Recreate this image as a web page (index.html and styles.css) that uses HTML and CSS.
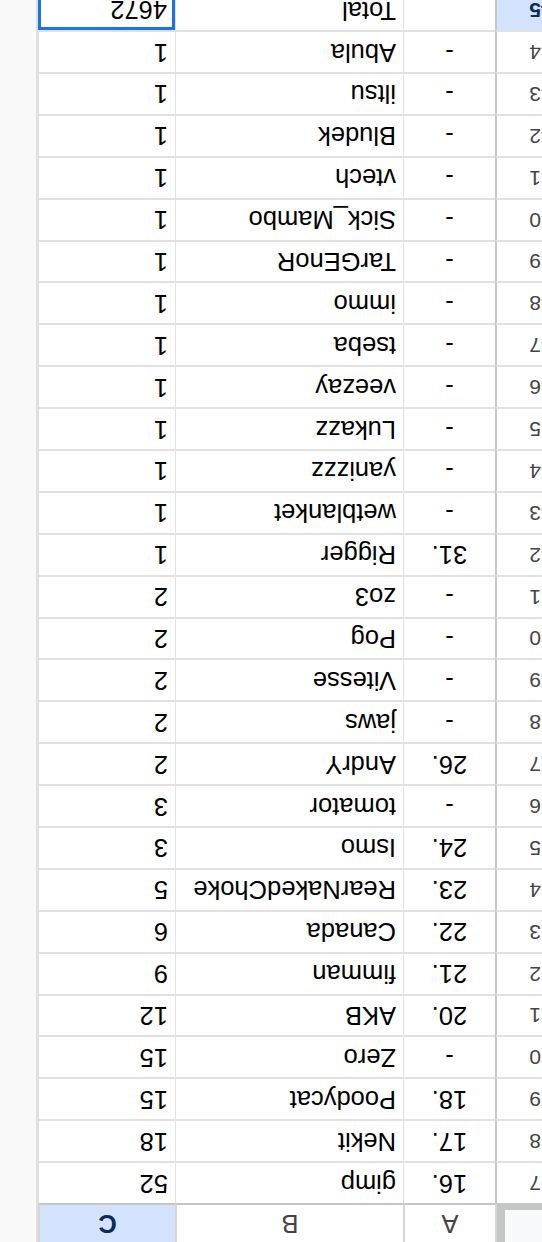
FILE: index.html
```html
<!DOCTYPE html>
<html lang="en">
<head>
  <meta charset="UTF-8" />
  <meta name="viewport" content="width=device-width, initial-scale=1.0"/>
  <title>Sheet</title>
  <link rel="stylesheet" href="styles.css">
</head>
<body>
  <!-- the whole screen is shown upside down -->
  <div class="screen">
    <div class="sheet">
      <div class="row head">
        <div class="corner"><span></span></div>
        <div class="colhead">A</div>
        <div class="colhead">B</div>
        <div class="colhead active">C</div>
      </div>

      <div class="row"><div class="num">17</div><div class="a">16.</div><div class="b">gimp</div><div class="c">52</div></div>
      <div class="row"><div class="num">18</div><div class="a">17.</div><div class="b">Nekit</div><div class="c">18</div></div>
      <div class="row"><div class="num">19</div><div class="a">18.</div><div class="b">Poodycat</div><div class="c">15</div></div>
      <div class="row"><div class="num">20</div><div class="a">-</div><div class="b">Zero</div><div class="c">15</div></div>
      <div class="row"><div class="num">21</div><div class="a">20.</div><div class="b">AKB</div><div class="c">12</div></div>
      <div class="row"><div class="num">22</div><div class="a">21.</div><div class="b">fimman</div><div class="c">9</div></div>
      <div class="row"><div class="num">23</div><div class="a">22.</div><div class="b">Canada</div><div class="c">6</div></div>
      <div class="row"><div class="num">24</div><div class="a">23.</div><div class="b">RearNakedChoke</div><div class="c">5</div></div>
      <div class="row"><div class="num">25</div><div class="a">24.</div><div class="b">Ismo</div><div class="c">3</div></div>
      <div class="row"><div class="num">26</div><div class="a">-</div><div class="b">tomator</div><div class="c">3</div></div>
      <div class="row"><div class="num">27</div><div class="a">26.</div><div class="b">AndrY</div><div class="c">2</div></div>
      <div class="row"><div class="num">28</div><div class="a">-</div><div class="b">jaws</div><div class="c">2</div></div>
      <div class="row"><div class="num">29</div><div class="a">-</div><div class="b">Vitesse</div><div class="c">2</div></div>
      <div class="row"><div class="num">30</div><div class="a">-</div><div class="b">Pog</div><div class="c">2</div></div>
      <div class="row"><div class="num">31</div><div class="a">-</div><div class="b">zo3</div><div class="c">2</div></div>
      <div class="row"><div class="num">32</div><div class="a">31.</div><div class="b">Rigger</div><div class="c">1</div></div>
      <div class="row"><div class="num">33</div><div class="a">-</div><div class="b">wetblanket</div><div class="c">1</div></div>
      <div class="row"><div class="num">34</div><div class="a">-</div><div class="b">yanizzz</div><div class="c">1</div></div>
      <div class="row"><div class="num">35</div><div class="a">-</div><div class="b">Lukazz</div><div class="c">1</div></div>
      <div class="row"><div class="num">36</div><div class="a">-</div><div class="b">veezay</div><div class="c">1</div></div>
      <div class="row"><div class="num">37</div><div class="a">-</div><div class="b">tseba</div><div class="c">1</div></div>
      <div class="row"><div class="num">38</div><div class="a">-</div><div class="b">immo</div><div class="c">1</div></div>
      <div class="row"><div class="num">39</div><div class="a">-</div><div class="b">TarGEnoR</div><div class="c">1</div></div>
      <div class="row"><div class="num">40</div><div class="a">-</div><div class="b">Sick_Mambo</div><div class="c">1</div></div>
      <div class="row"><div class="num">41</div><div class="a">-</div><div class="b">vtech</div><div class="c">1</div></div>
      <div class="row"><div class="num">42</div><div class="a">-</div><div class="b">Bludek</div><div class="c">1</div></div>
      <div class="row"><div class="num">43</div><div class="a">-</div><div class="b">iltsu</div><div class="c">1</div></div>
      <div class="row"><div class="num">44</div><div class="a">-</div><div class="b">Abula</div><div class="c">1</div></div>
      <div class="row"><div class="num active">45</div><div class="a"></div><div class="b">Total</div><div class="c selected">4672</div></div>
    </div>
    <div class="side"></div>
  </div>
</body>
</html>
```

FILE: styles.css
```css
body {
  margin: 0;
  background: #fff;
  font-family: "Liberation Sans", Arial, sans-serif;
}

/* screenshot is rotated by 180deg */
.screen {
  width: 542px;
  height: 1242px;
  overflow: hidden;
  display: flex;
  transform: rotate(180deg);
  background: #fff;
}

.sheet {
  width: 547px;
  margin-left: -43px;
  flex-shrink: 0;
}

.side {
  flex: 1;
  background: #f8f9f8;
  border-left: 2px solid #e0e0e0;
}

.row {
  display: grid;
  grid-template-columns: 90px 92px 228px 137px;
  height: 41.9px;
}

.row > div {
  box-sizing: border-box;
  border-right: 1px solid #e1e1e1;
  border-bottom: 2px solid #e1e1e1;
  display: flex;
  align-items: center;
  font-size: 25.5px;
  color: #000;
  white-space: nowrap;
  overflow: hidden;
}

.row .num {
  justify-content: center;
  font-size: 21px;
  color: #444;
  border-right: 2px solid #c4c7c5;
}

.row .num.active {
  background: #d3e3fd;
  color: #0b2a5e;
  font-weight: bold;
}

.row .a {
  justify-content: center;
}

.row .b {
  padding-left: 7px;
}

.row .c {
  padding-left: 7px;
}

.row .c.selected {
  border: 3px solid #1a73e8;
  padding-left: 5px;
}

/* column header row */
.row.head {
  height: 39px;
}

.row.head > div {
  border-bottom: 2px solid #c4c7c5;
  border-right: 2px solid #d6d6d6;
}

.corner {
  background: #c4c7c5;
  padding: 0 8px 5px 0;
  align-items: stretch !important;
}

.corner span {
  flex: 1;
  background: #f8f9fa;
}

.colhead {
  justify-content: center;
  font-size: 20px;
  color: #444 !important;
}

.colhead.active {
  background: #d3e3fd;
  color: #0b2a5e !important;
  font-weight: bold;
}
```
